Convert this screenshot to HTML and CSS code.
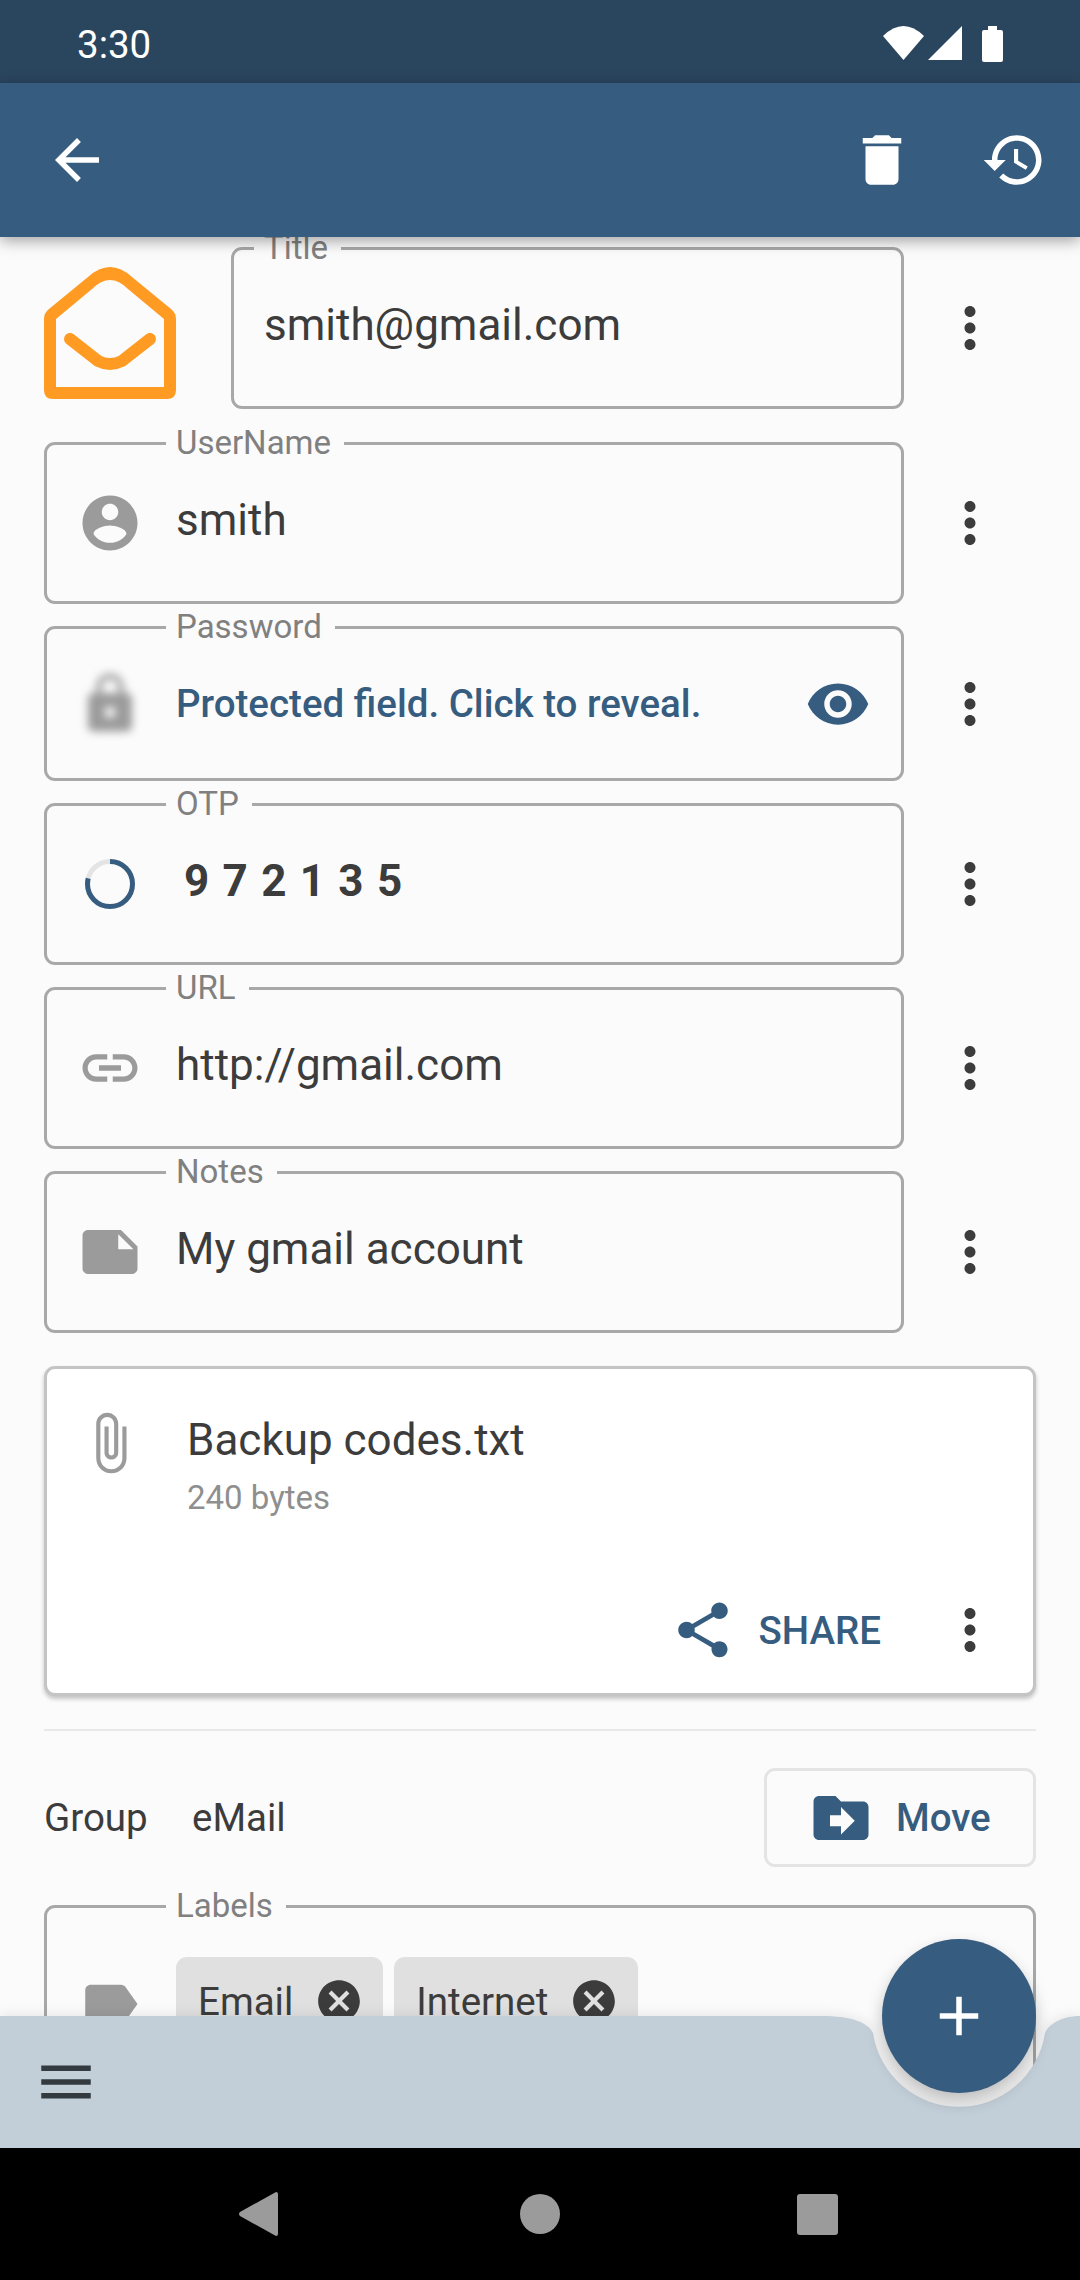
FILE: index.html
```html
<!DOCTYPE html>
<html lang="en">
<head>
  <meta charset="UTF-8" />
  <meta name="viewport" content="width=device-width, initial-scale=1" />
  <title>Edit entry</title>
  <link rel="stylesheet" href="styles.css">
</head>
<body>
  <div class="screen">
    <div class="status-bar">
      <span class="clock">3:30</span>
      <div class="status-icons">
        <svg class="wifi" viewBox="0 0 41 34"><path d="M0 10Q20.500-10 41 10L20.500 34Z"/></svg>
        <svg class="signal" viewBox="0 0 34 34"><path d="M34 0V34H0Z"/></svg>
        <svg class="battery" viewBox="0 0 21 36"><path d="M6 0H15V4H19Q21 4 21 6V34Q21 36 19 36H2Q0 36 0 34V6Q0 4 2 4H6Z"/></svg>
      </div>
    </div>

    <header class="app-bar">
      <button class="bar-btn"><svg class="icon" viewBox="0 0 24 24"><path d="M20 11H7.830l5.590-5.590L12 4l-8 8 8 8 1.410-1.410L7.830 13H20v-2z"/></svg></button>
      <div class="spacer"></div>
      <button class="bar-btn"><svg class="icon" viewBox="0 0 24 24"><path d="M6 19c0 1.100.9 2 2 2h8c1.100 0 2-.9 2-2V7H6v12zM19 4h-3.500l-1-1h-5l-1 1H5v2h14V4z"/></svg></button>
      <button class="bar-btn"><svg class="icon" viewBox="0 0 24 24"><path d="M13 3c-4.970 0-9 4.030-9 9H1l3.890 3.890.07.140L9 12H6c0-3.870 3.130-7 7-7s7 3.130 7 7-3.130 7-7 7c-1.930 0-3.680-.79-4.940-2.060l-1.420 1.420C8.270 19.990 10.510 21 13 21c4.970 0 9-4.030 9-9s-4.030-9-9-9zm-1 5v5l4.280 2.540.72-1.210-3.500-2.080V8H12z"/></svg></button>
    </header>

    <main class="content">
      <div class="fields">
        <div class="row row-title">
          <svg class="logo" viewBox="0 0 132 132">
            <path class="logo-shell" fill-rule="evenodd" d="M9 132Q0 132 0 123V52Q0 46 5 42L44 10Q66-10 88 10L127 42Q132 46 132 52V123Q132 132 123 132ZM12 52V120H120V52L84 22Q66 4 48 22Z"/>
            <path class="logo-flap" d="M26 72L54 94Q66 100 78 94L106 72"/>
          </svg>
          <fieldset class="field field-title">
            <legend>Title</legend>
            <div class="field-body"><span class="value">smith@gmail.com</span></div>
          </fieldset>
          <button class="more"><svg class="icon" viewBox="0 0 24 24"><path d="M12 8c1.100 0 2-.9 2-2s-.9-2-2-2-2 .9-2 2 .9 2 2 2zm0 2c-1.100 0-2 .9-2 2s.9 2 2 2 2-.9 2-2-.9-2-2-2zm0 6c-1.100 0-2 .9-2 2s.9 2 2 2 2-.9 2-2-.9-2-2-2z"/></svg></button>
        </div>

        <div class="row row-user">
          <fieldset class="field">
            <legend>UserName</legend>
            <div class="field-body">
              <svg class="icon grey" viewBox="0 0 24 24"><path d="M12 2C6.480 2 2 6.480 2 12s4.480 10 10 10 10-4.480 10-10S17.520 2 12 2zm0 3c1.660 0 3 1.340 3 3s-1.340 3-3 3-3-1.340-3-3 1.340-3 3-3zm0 14.200c-2.500 0-4.710-1.280-6-3.220.03-1.990 4-3.080 6-3.080 1.990 0 5.970 1.090 6 3.080-1.290 1.940-3.500 3.220-6 3.220z"/></svg>
              <span class="value">smith</span>
            </div>
          </fieldset>
          <button class="more"><svg class="icon" viewBox="0 0 24 24"><path d="M12 8c1.100 0 2-.9 2-2s-.9-2-2-2-2 .9-2 2 .9 2 2 2zm0 2c-1.100 0-2 .9-2 2s.9 2 2 2 2-.9 2-2-.9-2-2-2zm0 6c-1.100 0-2 .9-2 2s.9 2 2 2 2-.9 2-2-.9-2-2-2z"/></svg></button>
        </div>

        <div class="row">
          <fieldset class="field field-password">
            <legend>Password</legend>
            <div class="field-body">
              <svg class="icon grey blurred" viewBox="0 0 24 24"><path d="M18 8h-1V6c0-2.760-2.240-5-5-5S7 3.240 7 6v2H6c-1.100 0-2 .9-2 2v10c0 1.100.9 2 2 2h12c1.100 0 2-.9 2-2V10c0-1.100-.9-2-2-2zm-6 9c-1.100 0-2-.9-2-2s.9-2 2-2 2 .9 2 2-.9 2-2 2zm3.100-9H8.900V6c0-1.710 1.390-3.100 3.100-3.100 1.710 0 3.100 1.390 3.100 3.100v2z"/></svg>
              <span class="protected">Protected field. Click to reveal.</span>
              <svg class="icon eye" viewBox="0 0 24 24"><path d="M12 4.500C7 4.500 2.730 7.610 1 12c1.730 4.390 6 7.500 11 7.500s9.270-3.110 11-7.500c-1.730-4.390-6-7.500-11-7.500zM12 17c-2.760 0-5-2.240-5-5s2.240-5 5-5 5 2.240 5 5-2.240 5-5 5zm0-8c-1.660 0-3 1.340-3 3s1.340 3 3 3 3-1.340 3-3-1.340-3-3-3z"/></svg>
            </div>
          </fieldset>
          <button class="more"><svg class="icon" viewBox="0 0 24 24"><path d="M12 8c1.100 0 2-.9 2-2s-.9-2-2-2-2 .9-2 2 .9 2 2 2zm0 2c-1.100 0-2 .9-2 2s.9 2 2 2 2-.9 2-2-.9-2-2-2zm0 6c-1.100 0-2 .9-2 2s.9 2 2 2 2-.9 2-2-.9-2-2-2z"/></svg></button>
        </div>

        <div class="row">
          <fieldset class="field">
            <legend>OTP</legend>
            <div class="field-body">
              <svg class="icon timer" viewBox="0 0 66 66"><circle class="timer-track" cx="33" cy="33" r="22.500"/><circle class="timer-left" cx="33" cy="33" r="22.500" transform="rotate(-90 33 33)"/></svg>
              <span class="value otp">9 7 2 1 3 5</span>
            </div>
          </fieldset>
          <button class="more"><svg class="icon" viewBox="0 0 24 24"><path d="M12 8c1.100 0 2-.9 2-2s-.9-2-2-2-2 .9-2 2 .9 2 2 2zm0 2c-1.100 0-2 .9-2 2s.9 2 2 2 2-.9 2-2-.9-2-2-2zm0 6c-1.100 0-2 .9-2 2s.9 2 2 2 2-.9 2-2-.9-2-2-2z"/></svg></button>
        </div>

        <div class="row">
          <fieldset class="field">
            <legend>URL</legend>
            <div class="field-body">
              <svg class="icon grey" viewBox="0 0 24 24"><path d="M3.900 12c0-1.710 1.390-3.100 3.100-3.100h4V7H7c-2.760 0-5 2.240-5 5s2.240 5 5 5h4v-1.900H7c-1.710 0-3.100-1.390-3.100-3.100zM8 13h8v-2H8v2zm9-6h-4v1.900h4c1.710 0 3.100 1.390 3.100 3.100s-1.390 3.100-3.100 3.100h-4V17h4c2.760 0 5-2.240 5-5s-2.240-5-5-5z"/></svg>
              <span class="value">http://gmail.com</span>
            </div>
          </fieldset>
          <button class="more"><svg class="icon" viewBox="0 0 24 24"><path d="M12 8c1.100 0 2-.9 2-2s-.9-2-2-2-2 .9-2 2 .9 2 2 2zm0 2c-1.100 0-2 .9-2 2s.9 2 2 2 2-.9 2-2-.9-2-2-2zm0 6c-1.100 0-2 .9-2 2s.9 2 2 2 2-.9 2-2-.9-2-2-2z"/></svg></button>
        </div>

        <div class="row">
          <fieldset class="field">
            <legend>Notes</legend>
            <div class="field-body">
              <svg class="icon grey" viewBox="0 0 24 24"><path d="M22 10l-6-6H4c-1.100 0-2 .9-2 2v12.010c0 1.100.9 1.990 2 1.990l16-.01c1.100 0 2-.89 2-1.990v-8zm-7-4.500l5.500 5.500H15V5.500z"/></svg>
              <span class="value">My gmail account</span>
            </div>
          </fieldset>
          <button class="more"><svg class="icon" viewBox="0 0 24 24"><path d="M12 8c1.100 0 2-.9 2-2s-.9-2-2-2-2 .9-2 2 .9 2 2 2zm0 2c-1.100 0-2 .9-2 2s.9 2 2 2 2-.9 2-2-.9-2-2-2zm0 6c-1.100 0-2 .9-2 2s.9 2 2 2 2-.9 2-2-.9-2-2-2z"/></svg></button>
        </div>
      </div>

      <section class="card">
        <div class="file">
          <svg class="icon grey clip" viewBox="0 0 24 24"><path d="M16.500 6v11.500c0 2.210-1.790 4-4 4s-4-1.790-4-4V5c0-1.380 1.120-2.500 2.500-2.500s2.500 1.120 2.500 2.500v10.500c0 .55-.45 1-1 1s-1-.45-1-1V6H10v9.500c0 1.380 1.120 2.500 2.500 2.500s2.500-1.120 2.500-2.500V5c0-2.210-1.790-4-4-4S7 2.790 7 5v12.500c0 3.040 2.460 5.500 5.500 5.500s5.500-2.460 5.500-5.500V6h-1.500z"/></svg>
          <div>
            <div class="file-name">Backup codes.txt</div>
            <div class="file-size">240 bytes</div>
          </div>
        </div>
        <div class="card-actions">
          <svg class="icon blue" viewBox="0 0 24 24"><path d="M18 16.080c-.76 0-1.440.3-1.960.77L8.910 12.700c.05-.23.09-.46.09-.7s-.04-.47-.09-.7l7.050-4.110c.54.5 1.250.81 2.040.81 1.660 0 3-1.340 3-3s-1.340-3-3-3-3 1.340-3 3c0 .24.04.47.09.7L8.040 9.810C7.500 9.310 6.790 9 6 9c-1.660 0-3 1.340-3 3s1.340 3 3 3c.79 0 1.500-.31 2.040-.81l7.120 4.160c-.05.21-.08.43-.08.65 0 1.610 1.310 2.920 2.920 2.920 1.610 0 2.920-1.310 2.920-2.920s-1.310-2.920-2.920-2.920z"/></svg>
          <span class="share">SHARE</span>
          <button class="more"><svg class="icon" viewBox="0 0 24 24"><path d="M12 8c1.100 0 2-.9 2-2s-.9-2-2-2-2 .9-2 2 .9 2 2 2zm0 2c-1.100 0-2 .9-2 2s.9 2 2 2 2-.9 2-2-.9-2-2-2zm0 6c-1.100 0-2 .9-2 2s.9 2 2 2 2-.9 2-2-.9-2-2-2z"/></svg></button>
        </div>
      </section>

      <hr class="divider">

      <div class="group-row">
        <span class="group-label">Group</span>
        <span class="group-name">eMail</span>
        <button class="move">
          <svg class="icon blue" viewBox="0 0 24 24"><path d="M20 6h-8l-2-2H4c-1.100 0-1.990.9-1.990 2L2 18c0 1.100.9 2 2 2h16c1.100 0 2-.9 2-2V8c0-1.100-.9-2-2-2zm-8 12v-3H8v-4h4V8l5 5-5 5z"/></svg>
          <span>Move</span>
        </button>
      </div>

      <fieldset class="field field-labels">
        <legend>Labels</legend>
        <div class="labels-body">
          <svg class="icon grey tag" viewBox="0 0 24 24"><path d="M17.630 5.840C17.270 5.330 16.670 5 16 5L5 5.010C3.900 5.010 3 5.900 3 7v10c0 1.100.9 1.990 2 1.990L16 19c.67 0 1.270-.33 1.630-.84L22 12l-4.370-6.160z"/></svg>
          <div class="chips">
            <span class="chip">Email
              <svg class="chip-x" viewBox="0 0 24 24"><path d="M12 2C6.470 2 2 6.470 2 12s4.470 10 10 10 10-4.470 10-10S17.530 2 12 2zm5 13.590L15.590 17 12 13.410 8.410 17 7 15.590 10.590 12 7 8.410 8.410 7 12 10.590 15.590 7 17 8.410 13.410 12 17 15.590z"/></svg>
            </span>
            <span class="chip">Internet
              <svg class="chip-x" viewBox="0 0 24 24"><path d="M12 2C6.470 2 2 6.470 2 12s4.470 10 10 10 10-4.470 10-10S17.530 2 12 2zm5 13.590L15.590 17 12 13.410 8.410 17 7 15.590 10.590 12 7 8.410 8.410 7 12 10.590 15.590 7 17 8.410 13.410 12 17 15.590z"/></svg>
            </span>
          </div>
        </div>
      </fieldset>
    </main>

    <nav class="nav-bar">
      <svg class="nav-back" viewBox="0 0 39 44"><path d="M37 0Q39 0 39 2V42Q39 44 37 44L1 24Q-1 22 1 20Z"/></svg>
      <span class="nav-home"></span>
      <span class="nav-recent"></span>
    </nav>

    <!-- bottom app bar sits over the scrolling content, with a notch for the fab -->
    <div class="bottom-bar">
      <svg class="bottom-shape" viewBox="0 0 1080 132"><path d="M0 0H822C850 0 868 6 873 17A87 87 0 0 0 1045 17C1050 6 1065 0 1080 0V132H0Z"/></svg>
      <button class="menu-btn"><svg class="icon" viewBox="0 0 24 24"><path d="M3 18h18v-2H3v2zm0-5h18v-2H3v2zm0-7v2h18V6H3z"/></svg></button>
    </div>
    <button class="fab"><svg class="icon" viewBox="0 0 24 24"><path d="M19 13h-6v6h-2v-6H5v-2h6V5h2v6h6v2z"/></svg></button>
  </div>
</body>
</html>
```

FILE: styles.css
```css
* {
  box-sizing: border-box;
}

body {
  margin: 0;
  background-color: #fbfbfb;
  font-family: Roboto, "Noto Sans", sans-serif;
  color: #3c3c3c;
}

button {
  background: none;
  border: none;
  padding: 0;
  margin: 0;
  color: inherit;
  font: inherit;
}

.screen {
  position: relative;
  display: flex;
  flex-direction: column;
  width: 1080px;
  height: 2280px;
  overflow: hidden;
}

.icon {
  display: block;
  flex: none;
  width: 66px;
  height: 66px;
  fill: currentColor;
}

.grey { color: #9b9b9b; }
.blue { color: #365d80; }

/* status bar */
.status-bar {
  flex: none;
  display: flex;
  align-items: center;
  justify-content: space-between;
  height: 83px;
  padding: 6px 77px 0;
  background-color: #2a455e;
  color: white;
}

.clock {
  font-size: 38.5px;
}

.status-icons {
  display: flex;
  align-items: flex-start;
  margin-top: -2px;
}

.status-icons svg {
  display: block;
  fill: white;
}

.wifi { width: 41px; height: 34px; }
.signal { width: 34px; height: 34px; margin-left: 4px; }
.battery { width: 21px; height: 36px; margin-left: 20px; }

/* app bar */
.app-bar {
  position: relative;
  z-index: 2;
  flex: none;
  display: flex;
  align-items: center;
  height: 154px;
  background-color: #365d80;
  color: white;
  box-shadow: 0 4px 14px rgba(0,0,0,0.35);
}

.bar-btn {
  display: flex;
  align-items: center;
  justify-content: center;
  width: 132px;
  height: 132px;
}

.app-bar .bar-btn:first-child {
  width: 154px;
}

.spacer {
  flex: 1;
}

/* content */
.content {
  flex: 1;
  min-height: 0;
  overflow: hidden;
  padding: 0 44px;
}

.fields {
  display: flex;
  flex-direction: column;
  gap: 5px;
  margin-top: -7px;
}

.row {
  display: flex;
  align-items: center;
}

.row-title {
  height: 179px;
}

.row-user {
  margin-top: 11px;
}

.logo {
  flex: none;
  align-self: flex-start;
  width: 132px;
  height: 132px;
  margin: 37px 55px 0 0;
}

.logo-shell {
  fill: #ff9a22;
}

.logo-flap {
  fill: none;
  stroke: #ff9a22;
  stroke-width: 12;
  stroke-linecap: round;
}

.field {
  flex: 1;
  min-width: 0;
  height: 179px;
  margin: 0;
  padding: 0 30px 16px;
  border: 3px solid #a8a8a8;
  border-radius: 11px;
}

.field legend {
  margin-left: 89px;
  padding: 0 13px 0 10px;
  font-size: 33px;
  line-height: 36px;
  color: #808080;
}

.field-title {
  height: 179px;
}

.field-title legend {
  margin-left: -10px;
}

.field-password {
  height: 172px;
}

.field-body {
  display: flex;
  align-items: center;
  gap: 33px;
  height: 100%;
}

.value {
  margin-bottom: 6px;
  font-size: 44px;
  line-height: 52px;
}

.otp {
  margin-left: 8px;
  font-weight: 700;
  letter-spacing: 1.200px;
}

.protected {
  flex: 1;
  font-size: 38.5px;
  font-weight: 500;
  color: #365d80;
}

.eye {
  color: #365d80;
}

.blurred {
  filter: blur(4px);
}

.timer {
  fill: none;
  stroke-width: 5;
}

.timer-track {
  stroke: #e4e4e4;
}

.timer-left {
  stroke: #365d80;
  stroke-dasharray: 111 142;
}

.more {
  flex: none;
  display: flex;
  align-items: center;
  justify-content: center;
  width: 132px;
  height: 66px;
  margin-top: 17px;
  color: #3c3c3c;
}

/* attachment card */
.card {
  display: flex;
  flex-direction: column;
  height: 330px;
  margin-top: 33px;
  padding: 45px 0 30px 30px;
  background: white;
  border: 3px solid #c4c4c4;
  border-radius: 11px;
  box-shadow: 0 3px 4px rgba(0,0,0,0.22);
}

.file {
  display: flex;
  gap: 44px;
}

.clip {
  margin-top: -4px;
}

.file-name {
  font-size: 44px;
  line-height: 52px;
}

.file-size {
  margin-top: 12px;
  font-size: 33px;
  line-height: 40px;
  color: #8f8f8f;
}

.card-actions {
  display: flex;
  align-items: center;
  justify-content: flex-end;
  gap: 23px;
  margin-top: auto;
}

.share {
  margin-right: 3px;
  font-size: 38.5px;
  font-weight: 500;
  color: #365d80;
}

.card-actions .more {
  width: 126px;
  margin-top: 0;
}

.divider {
  height: 2px;
  margin: 33px 0 0;
  background-color: #e8e8e8;
  border: none;
}

/* group */
.group-row {
  display: flex;
  align-items: center;
  height: 99px;
  margin-top: 37px;
  font-size: 38.5px;
}

.group-label {
  width: 148px;
}

.group-name {
  flex: 1;
}

.move {
  display: flex;
  align-items: center;
  gap: 22px;
  width: 272px;
  height: 99px;
  padding-left: 41px;
  border: 3px solid #e4e4e4;
  border-radius: 11px;
  font-weight: 500;
  color: #365d80;
}

/* labels */
.field-labels {
  height: 300px;
  margin-top: 21px;
}

.labels-body {
  display: flex;
  gap: 33px;
  padding-top: 33px;
}

.tag {
  margin-top: 14px;
}

.chips {
  display: flex;
  gap: 11px;
}

.chip {
  display: flex;
  align-items: center;
  gap: 21px;
  height: 88px;
  padding: 0 19px 0 22px;
  border-radius: 11px;
  background-color: #e0e0e0;
  font-size: 38.5px;
}

.chip-x {
  width: 50px;
  height: 50px;
  fill: #3c3c3c;
}

/* nav bar */
.nav-bar {
  flex: none;
  position: relative;
  display: flex;
  align-items: center;
  height: 132px;
  padding-left: 239px;
  background-color: black;
}

.nav-back {
  width: 39px;
  height: 44px;
  margin-right: 242px;
  fill: #9b9b9b;
}

.nav-home {
  width: 40px;
  height: 40px;
  border-radius: 50%;
  background-color: #9b9b9b;
}

.nav-recent {
  width: 41px;
  height: 41px;
  margin-left: 237px;
  border-radius: 3px;
  background-color: #9b9b9b;
}

/* bottom bar and fab */
.bottom-bar {
  position: absolute;
  left: 0;
  bottom: 132px;
  display: flex;
  align-items: center;
  width: 1080px;
  height: 132px;
}

.bottom-shape {
  position: absolute;
  left: 0;
  top: 0;
  width: 1080px;
  height: 132px;
  fill: #c2ced8;
  filter: drop-shadow(0 -2px 6px rgba(0,0,0,0.08));
}

.menu-btn {
  position: relative;
  margin-left: 33px;
  color: #333a40;
}

.fab {
  position: absolute;
  left: 882px;
  top: 1939px;
  display: flex;
  align-items: center;
  justify-content: center;
  width: 154px;
  height: 154px;
  border-radius: 50%;
  background-color: #365d80;
  color: white;
  box-shadow: 0 8px 16px rgba(0,0,0,0.25);
}
```
